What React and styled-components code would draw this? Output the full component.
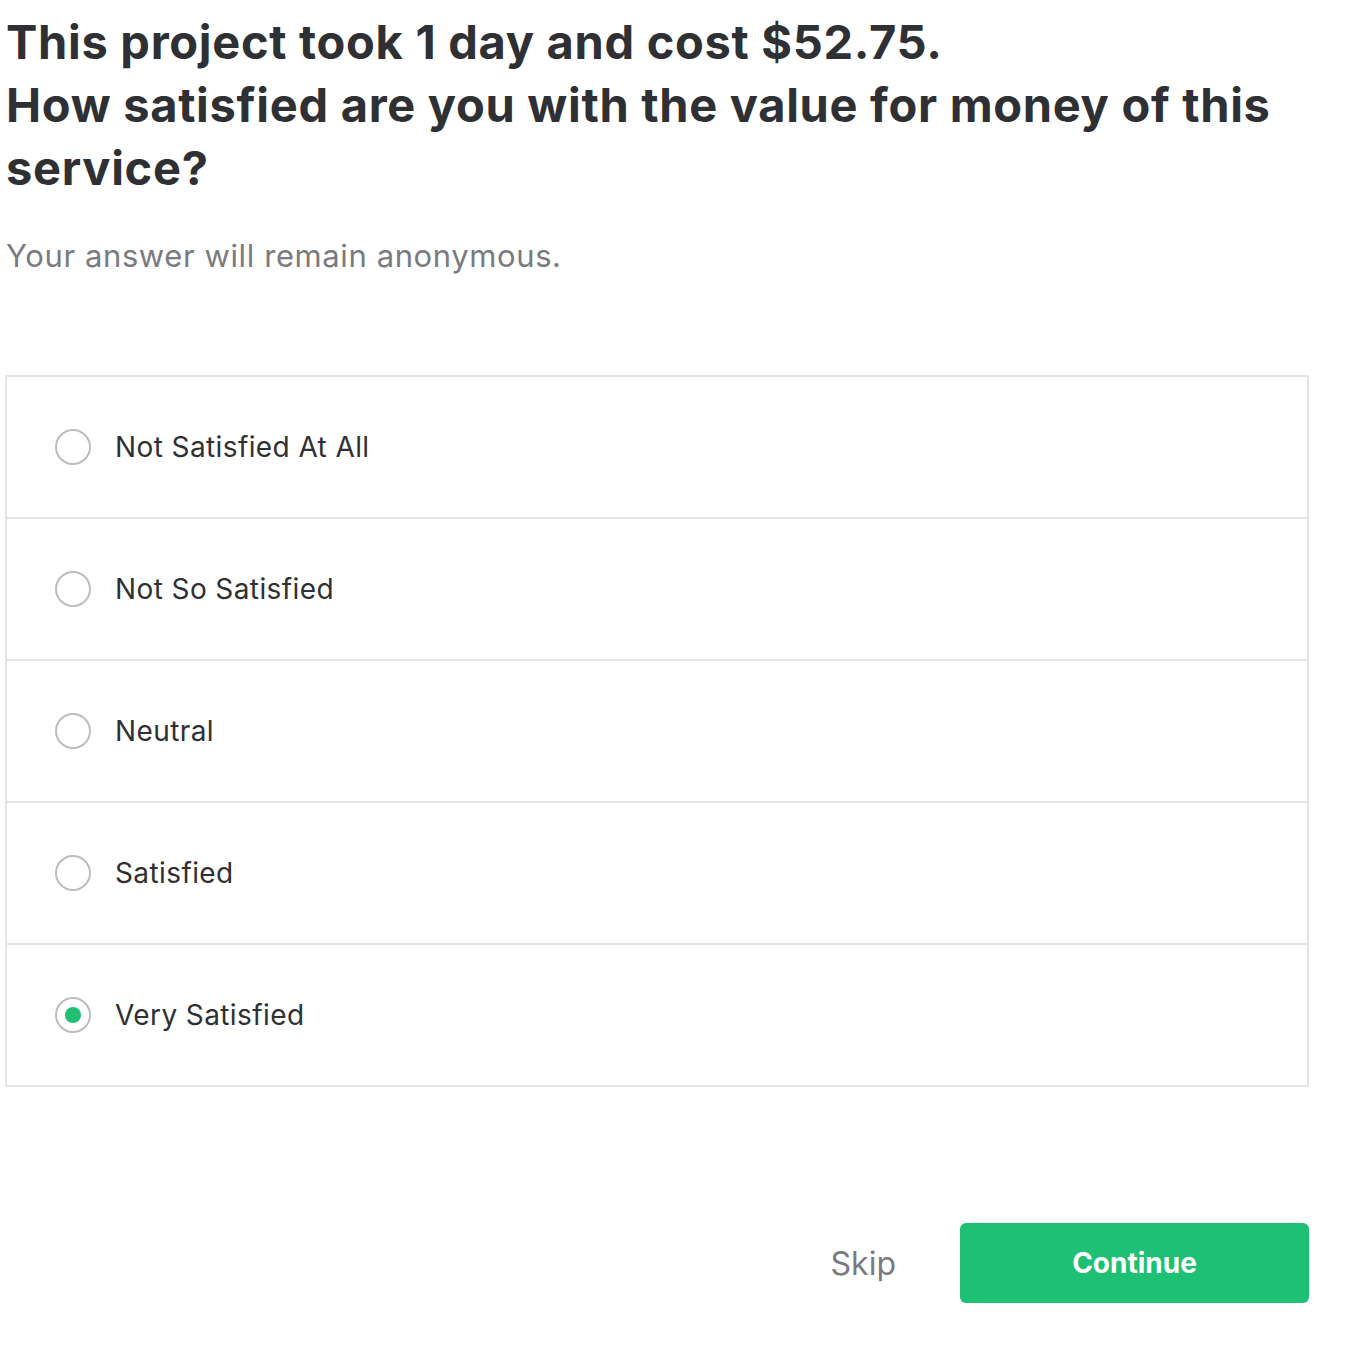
import React, { useState } from "react";
import styled, { createGlobalStyle } from "styled-components";

const GlobalStyle = createGlobalStyle`
  body {
    margin: 0;
    background: #ffffff;
    font-family: Inter, "Noto Sans", sans-serif;
  }
`;

const Page = styled.div`
  width: 1304px;
  padding: 10px 0 0 5px;
  display: flex;
  flex-direction: column;
`;

const Heading = styled.h1`
  margin: 0 0 0 1px;
  font-size: 47px;
  line-height: 63px;
  font-weight: 700;
  color: #2f3033;
  letter-spacing: 0.7px;
`;

const Subtitle = styled.p`
  margin: 37px 0 0 1px;
  font-size: 31px;
  line-height: 40px;
  color: #7a7b80;
  letter-spacing: 0.6px;
`;

const OptionList = styled.div`
  margin-top: 99px;
  border: 2px solid #e4e4e6;
  display: flex;
  flex-direction: column;
`;

const Option = styled.label`
  height: 140px;
  display: flex;
  align-items: center;
  gap: 24px;
  padding-left: 48px;
  cursor: pointer;
  border-top: ${(p) => (p.$first ? "none" : "2px solid #e4e4e6")};
`;

const Radio = styled.span`
  width: 36px;
  height: 36px;
  box-sizing: border-box;
  border-radius: 50%;
  border: 2px solid #bdbdc2;
  display: flex;
  align-items: center;
  justify-content: center;

  &::after {
    content: "";
    width: 16px;
    height: 16px;
    border-radius: 50%;
    background: ${(p) => (p.$checked ? "#1fc071" : "transparent")};
  }
`;

const OptionText = styled.span`
  font-size: 28px;
  color: #2f3033;
  letter-spacing: 0.4px;
`;

const Footer = styled.div`
  margin-top: 136px;
  display: flex;
  justify-content: flex-end;
  align-items: center;
  gap: 64px;
`;

const SkipButton = styled.button`
  background: none;
  border: 0;
  padding: 0;
  font-family: inherit;
  font-size: 32px;
  color: #7a7b80;
  cursor: pointer;
`;

const ContinueButton = styled.button`
  width: 349px;
  height: 80px;
  border: 0;
  border-radius: 6px;
  background: #1ec074;
  color: #ffffff;
  font-family: inherit;
  font-size: 28px;
  font-weight: 700;
  cursor: pointer;
`;

const options = [
  "Not Satisfied At All",
  "Not So Satisfied",
  "Neutral",
  "Satisfied",
  "Very Satisfied",
];

export default function App() {
  const [selected, setSelected] = useState(4);

  return (
    <Page>
      <GlobalStyle />
      <Heading>
        This project took 1 day and cost $52.75.
        <br />
        How satisfied are you with the value for money of this service?
      </Heading>
      <Subtitle>Your answer will remain anonymous.</Subtitle>
      <OptionList>
        {options.map((text, i) => (
          <Option key={text} $first={i === 0} onClick={() => setSelected(i)}>
            <Radio $checked={selected === i} />
            <OptionText>{text}</OptionText>
          </Option>
        ))}
      </OptionList>
      <Footer>
        <SkipButton>Skip</SkipButton>
        <ContinueButton>Continue</ContinueButton>
      </Footer>
    </Page>
  );
}
